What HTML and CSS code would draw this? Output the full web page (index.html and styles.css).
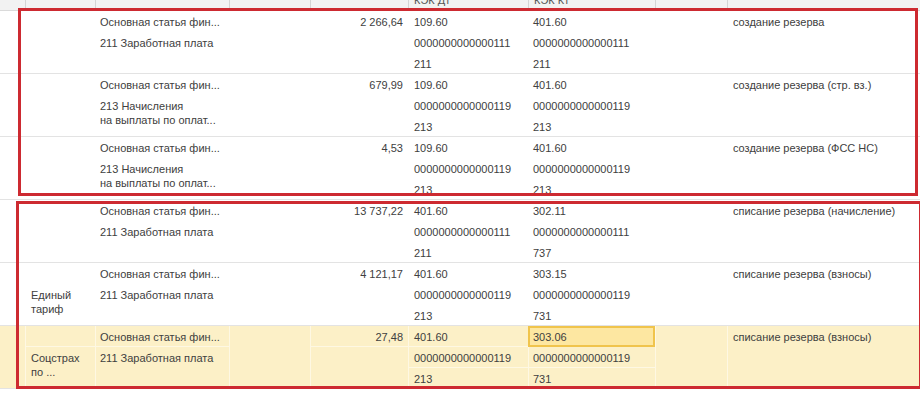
FILE: index.html
```html
<!DOCTYPE html>
<html lang="ru">
<head>
<meta charset="utf-8">
<link rel="stylesheet" href="styles.css">
</head>
<body>
<div class="wrap">
  <div class="grid head">
    <div class="h"></div>
    <div class="h"></div>
    <div class="h"></div>
    <div class="h"></div>
    <div class="h"></div>
    <div class="h">КЭК Дт</div>
    <div class="h">КЭК Кт</div>
    <div class="h"></div>
    <div class="h"></div>
  </div>

  <div class="grid row">
    <div class="c"></div>
    <div class="c"></div>
    <div class="c"><div class="s">Основная статья фин...</div><div class="m">211 Заработная плата</div></div>
    <div class="c"></div>
    <div class="c num"><div class="s">2 266,64</div></div>
    <div class="c"><div class="s">109.60</div><div class="s">0000000000000111</div><div class="s">211</div></div>
    <div class="c"><div class="s">401.60</div><div class="s">0000000000000111</div><div class="s">211</div></div>
    <div class="c"></div>
    <div class="c"><div class="s">создание резерва</div></div>
  </div>

  <div class="grid row">
    <div class="c"></div>
    <div class="c"></div>
    <div class="c"><div class="s">Основная статья фин...</div><div class="m">213 Начисления<br>на выплаты по оплат...</div></div>
    <div class="c"></div>
    <div class="c num"><div class="s">679,99</div></div>
    <div class="c"><div class="s">109.60</div><div class="s">0000000000000119</div><div class="s">213</div></div>
    <div class="c"><div class="s">401.60</div><div class="s">0000000000000119</div><div class="s">213</div></div>
    <div class="c"></div>
    <div class="c"><div class="s">создание резерва (стр. вз.)</div></div>
  </div>

  <div class="grid row">
    <div class="c"></div>
    <div class="c"></div>
    <div class="c"><div class="s">Основная статья фин...</div><div class="m">213 Начисления<br>на выплаты по оплат...</div></div>
    <div class="c"></div>
    <div class="c num"><div class="s">4,53</div></div>
    <div class="c"><div class="s">109.60</div><div class="s">0000000000000119</div><div class="s">213</div></div>
    <div class="c"><div class="s">401.60</div><div class="s">0000000000000119</div><div class="s">213</div></div>
    <div class="c"></div>
    <div class="c"><div class="s">создание резерва (ФСС НС)</div></div>
  </div>

  <div class="grid row">
    <div class="c"></div>
    <div class="c"></div>
    <div class="c"><div class="s">Основная статья фин...</div><div class="m">211 Заработная плата</div></div>
    <div class="c"></div>
    <div class="c num"><div class="s">13 737,22</div></div>
    <div class="c"><div class="s">401.60</div><div class="s">0000000000000111</div><div class="s">211</div></div>
    <div class="c"><div class="s">302.11</div><div class="s">0000000000000111</div><div class="s">737</div></div>
    <div class="c"></div>
    <div class="c"><div class="s">списание резерва (начисление)</div></div>
  </div>

  <div class="grid row">
    <div class="c"></div>
    <div class="c"><div class="s"></div><div class="m">Единый<br>тариф</div></div>
    <div class="c"><div class="s">Основная статья фин...</div><div class="m">211 Заработная плата</div></div>
    <div class="c"></div>
    <div class="c num"><div class="s">4 121,17</div></div>
    <div class="c"><div class="s">401.60</div><div class="s">0000000000000119</div><div class="s">213</div></div>
    <div class="c"><div class="s">303.15</div><div class="s">0000000000000119</div><div class="s">731</div></div>
    <div class="c"></div>
    <div class="c"><div class="s">списание резерва (взносы)</div></div>
  </div>

  <div class="grid row sel">
    <div class="c first"></div>
    <div class="c"><div class="s ln"></div><div class="m">Соцстрах<br>по ...</div></div>
    <div class="c"><div class="s ln">Основная статья фин...</div><div class="m">211 Заработная плата</div></div>
    <div class="c"></div>
    <div class="c num"><div class="s ln">27,48</div></div>
    <div class="c"><div class="s ln">401.60</div><div class="s ln">0000000000000119</div><div class="s">213</div></div>
    <div class="c"><div class="s ln focus">303.06</div><div class="s ln">0000000000000119</div><div class="s">731</div></div>
    <div class="c"></div>
    <div class="c"><div class="s">списание резерва (взносы)</div></div>
  </div>

  <div class="mark mark1"></div>
  <div class="mark mark2"></div>
</div>
</body>
</html>
```

FILE: styles.css
```css
html, body {
  margin: 0;
  padding: 0;
  background: #ffffff;
  overflow: hidden;
}

body {
  font-family: "Liberation Sans", Arial, sans-serif;
  font-size: 11px;
  line-height: 14px;
  color: #404040;
}

.wrap {
  position: relative;
  width: 920px;
  margin-top: -14px;
}

.grid {
  display: grid;
  grid-template-columns: 25px 70px 134px 81px 98px 120px 127px 72px 1fr;
}

.head {
  height: 25px;
  box-sizing: border-box;
  background: #f2f2f2;
  border-bottom: 1px solid #dadada;
}

.head .h {
  box-shadow: inset 1px 0 0 #d4d4d4;
  padding: 7px 5px 0 6px;
  color: #555555;
  white-space: nowrap;
}

.head .h:first-child {
  box-shadow: none;
}

.row {
  height: 63px;
  box-sizing: border-box;
  border-bottom: 1px solid #e3e3e3;
}

.c {
  display: flex;
  flex-direction: column;
  min-width: 0;
}

.s {
  height: 21px;
  box-sizing: border-box;
  padding: 4px 5px 0 6px;
  white-space: nowrap;
  overflow: hidden;
}

.m {
  flex: 1;
  padding: 4px 5px 0 6px;
  white-space: nowrap;
}

.c:nth-child(3) .s,
.c:nth-child(3) .m {
  padding-left: 5px;
}

.c:nth-child(7) .s {
  padding-left: 5px;
}

.num .s {
  text-align: right;
  padding-right: 5px;
}

.sel {
  background: #fcf0c7;
}

.sel .c {
  box-shadow: inset 1px 0 0 #fef8e3;
}

.sel .c.first {
  box-shadow: none;
}

.sel .s.ln {
  border-bottom: 1px solid #fef8e3;
}

.sel .s.focus {
  background: #fde7a1;
  border: 2px solid #f0c44c;
  padding: 2px 4px 0 3px;
}

.mark {
  position: absolute;
  border: 3px solid #cd2a31;
  box-sizing: border-box;
  pointer-events: none;
}

.mark1 {
  left: 18px;
  top: 22px;
  width: 900px;
  height: 188px;
}

.mark2 {
  left: 16px;
  top: 215px;
  width: 906px;
  height: 188px;
}
```
